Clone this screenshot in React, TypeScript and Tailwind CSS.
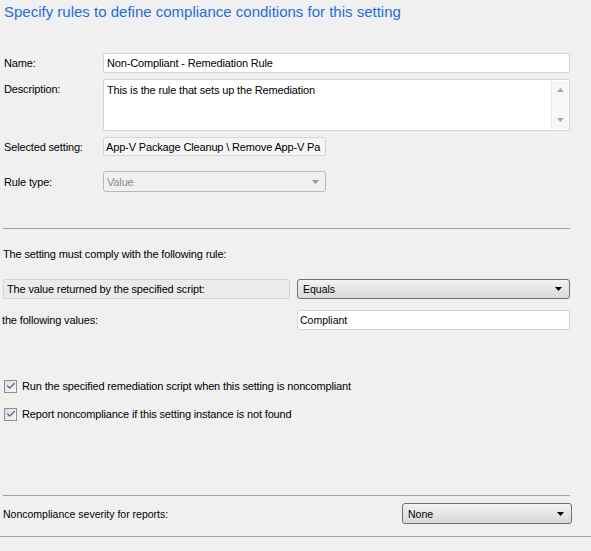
import { Check } from 'lucide-react'

const ui = "font-['Segoe_UI','Liberation_Sans',Arial,sans-serif]"

function Arrow({ color = '#000' }: { color?: string }) {
  return (
    <svg width="7" height="4" viewBox="0 0 7 4" className="shrink-0">
      <path d="M0 0 H7 L3.5 4 Z" fill={color} />
    </svg>
  )
}

function DropDown({ value, className }: { value: string; className: string }) {
  return (
    <div
      className={`flex items-center justify-between rounded-[3px] border border-[#707070] bg-gradient-to-b from-[#f2f2f2] to-[#d9d9d9] pl-[5px] pr-[7px] text-[10.5px] tracking-normal text-black ${className}`}
    >
      <span>{value}</span>
      <Arrow />
    </div>
  )
}

function CheckRow({ label, className }: { label: string; className: string }) {
  return (
    <div className={`flex items-center gap-[5px] pl-[4px] ${className}`}>
      <div className="flex h-[13px] w-[13px] items-center justify-center border border-[#8f8f8f] bg-gradient-to-br from-[#dcdcdc] to-[#f7f7f7]">
        <Check size={10} strokeWidth={3} className="text-[#4a5f8a]" />
      </div>
      <span>{label}</span>
    </div>
  )
}

export default function App() {
  return (
    <div className={`h-[551px] w-[591px] overflow-hidden bg-[#f0f0f0] text-[11px] leading-[16px] tracking-[-0.15px] text-black ${ui}`}>
      <h1 className="h-[24px] pl-[4px] pt-[2px] text-[15px] leading-[20px] tracking-normal text-[#1f6fd6]">
        Specify rules to define compliance conditions for this setting
      </h1>

      {/* general */}
      <div className="mt-[29px] flex h-[20px] items-center">
        <span className="w-[103px] pl-[4px]">Name:</span>
        <div className="flex h-full w-[467px] items-center rounded-[2px] border border-[#d5d5d5] bg-white px-[3px]">
          Non-Compliant - Remediation Rule
        </div>
      </div>

      <div className="mt-[6px] flex h-[52px]">
        <span className="w-[103px] pl-[4px] pt-[2px]">Description:</span>
        <div className="flex h-full w-[467px] rounded-[2px] border border-[#d5d5d5] bg-white">
          <div className="flex-1 px-[3px] pt-[2px]">This is the rule that sets up the Remediation</div>
          <div className="my-px mr-px flex w-[17px] flex-col items-center justify-between border-l border-[#e6e6e6] bg-[#f7f7f7] py-[7px]">
            <svg width="7" height="4" viewBox="0 0 7 4"><path d="M0 4 H7 L3.5 0 Z" fill="#a8a8a8" /></svg>
            <Arrow color="#a8a8a8" />
          </div>
        </div>
      </div>

      <div className="mt-[6px] flex h-[19px] items-center">
        <span className="w-[103px] pl-[4px]">Selected setting:</span>
        <div className="flex h-full w-[223px] items-center overflow-hidden whitespace-nowrap rounded-[2px] border border-[#d5d5d5] bg-[#f5f5f5] px-[2px]">
          App-V Package Cleanup \ Remove App-V Pa
        </div>
      </div>

      <div className="mt-[15px] flex h-[21px] items-center">
        <span className="w-[103px] pl-[4px]">Rule type:</span>
        <div className="flex h-full w-[223px] items-center justify-between rounded-[3px] border border-[#b8b8b8] bg-[#f0f0f0] pl-[3px] pr-[6px] text-[#8a8a8a]">
          <span>Value</span>
          <Arrow color="#9a9a9a" />
        </div>
      </div>

      <div className="ml-[3px] mt-[36px] h-px w-[567px] bg-[#a0a0a0]" />

      {/* rule */}
      <div className="mt-[17px] h-[16px] pl-[3px]">The setting must comply with the following rule:</div>

      <div className="mt-[17px] flex h-[20px] items-center gap-[7px] pl-[3px]">
        <div className="flex h-full w-[287px] items-center rounded-[2px] border border-[#d5d5d5] bg-[#ebebeb] px-[3px]">
          The value returned by the specified script:
        </div>
        <DropDown value="Equals" className="h-full w-[273px]" />
      </div>

      <div className="mt-[11px] flex h-[20px] items-center">
        <span className="w-[297px] pl-[2px]">the following values:</span>
        <div className="flex h-full w-[273px] items-center rounded-[2px] border border-[#d5d5d5] bg-white px-[2px] text-[10.5px] tracking-normal">
          Compliant
        </div>
      </div>

      <CheckRow className="mt-[48px] h-[16px]" label="Run the specified remediation script when this setting is noncompliant" />
      <CheckRow className="mt-[12px] h-[16px]" label="Report noncompliance if this setting instance is not found" />

      <div className="ml-[3px] mt-[73px] h-px w-[567px] bg-[#a0a0a0]" />

      <div className="mt-[7px] flex h-[21px] items-center">
        <span className="w-[402px] pl-[3px] text-[10.5px] tracking-normal">Noncompliance severity for reports:</span>
        <DropDown value="None" className="h-full w-[170px]" />
      </div>

      <div className="mt-[12px] h-px w-full bg-[#a0a0a0]" />
    </div>
  )
}
